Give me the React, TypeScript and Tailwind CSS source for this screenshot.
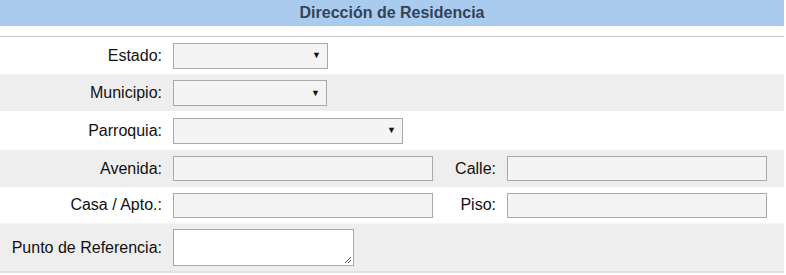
const FONT = "font-['Liberation_Sans',Arial,sans-serif]";

function Select({ width }: { width: string }) {
  return (
    <div
      className={`flex h-[26px] ${width} items-center justify-end border border-[#a9a9a9] bg-[#f4f4f4] pr-[6px]`}
    >
      <span className="text-[9px] leading-none text-[#111]">▼</span>
    </div>
  );
}

function Field({ className = "" }: { className?: string }) {
  return (
    <div
      className={`h-[25px] w-[260px] border border-[#a9a9a9] bg-[#f4f4f4] ${className}`}
    />
  );
}

function Label({ children }: { children: React.ReactNode }) {
  return (
    <div className="flex items-center justify-end pr-[11px] text-[16px] text-[#111]">
      {children}
    </div>
  );
}

export default function App() {
  return (
    <div className={`w-[784px] bg-white ${FONT}`}>
      {/* Header */}
      <div className="flex h-[26px] items-center justify-center bg-[#a8cbee] text-[16px] font-bold text-[#354356]">
        Dirección de Residencia
      </div>
      <div className="h-[10px]" />
      <div className="border-t border-[#c8c8c8]" />

      <div className="grid grid-cols-[173px_271px_63px_1fr] border-b-2 border-[#e0e0e0]">
        {/* Estado */}
        <div className="col-span-4 grid h-[37px] grid-cols-subgrid bg-white">
          <Label>Estado:</Label>
          <div className="col-span-3 flex items-center">
            <Select width="w-[155px]" />
          </div>
        </div>

        {/* Municipio */}
        <div className="col-span-4 grid h-[37px] grid-cols-subgrid border-t border-[#f4f4f4] bg-[#eeeeee]">
          <Label>Municipio:</Label>
          <div className="col-span-3 flex items-center">
            <Select width="w-[154px]" />
          </div>
        </div>

        {/* Parroquia */}
        <div className="col-span-4 grid h-[39px] grid-cols-subgrid bg-white">
          <Label>Parroquia:</Label>
          <div className="col-span-3 flex items-center">
            <Select width="w-[230px]" />
          </div>
        </div>

        {/* Avenida / Calle */}
        <div className="col-span-4 grid h-[37px] grid-cols-subgrid bg-[#eeeeee]">
          <Label>Avenida:</Label>
          <div className="flex items-center">
            <Field />
          </div>
          <Label>Calle:</Label>
          <div className="flex items-center">
            <Field />
          </div>
        </div>

        {/* Casa / Piso */}
        <div className="col-span-4 grid h-[36px] grid-cols-subgrid bg-white">
          <Label>Casa / Apto.:</Label>
          <div className="flex items-center">
            <Field />
          </div>
          <Label>Piso:</Label>
          <div className="flex items-center">
            <Field />
          </div>
        </div>

        {/* Punto de Referencia */}
        <div className="col-span-4 grid h-[48px] grid-cols-subgrid border-t border-[#f6f6f6] bg-[#eeeeee]">
          <Label>Punto de Referencia:</Label>
          <div className="col-span-3 flex items-center">
            <div className="relative h-[37px] w-[181px] border border-[#a9a9a9] bg-white">
              <svg
                className="absolute right-[1px] bottom-[1px]"
                width="9"
                height="9"
                viewBox="0 0 9 9"
                aria-hidden
              >
                <path d="M8 2 L2 8 M8 5 L5 8" stroke="#555" strokeWidth="1" />
              </svg>
            </div>
          </div>
        </div>
      </div>
    </div>
  );
}
